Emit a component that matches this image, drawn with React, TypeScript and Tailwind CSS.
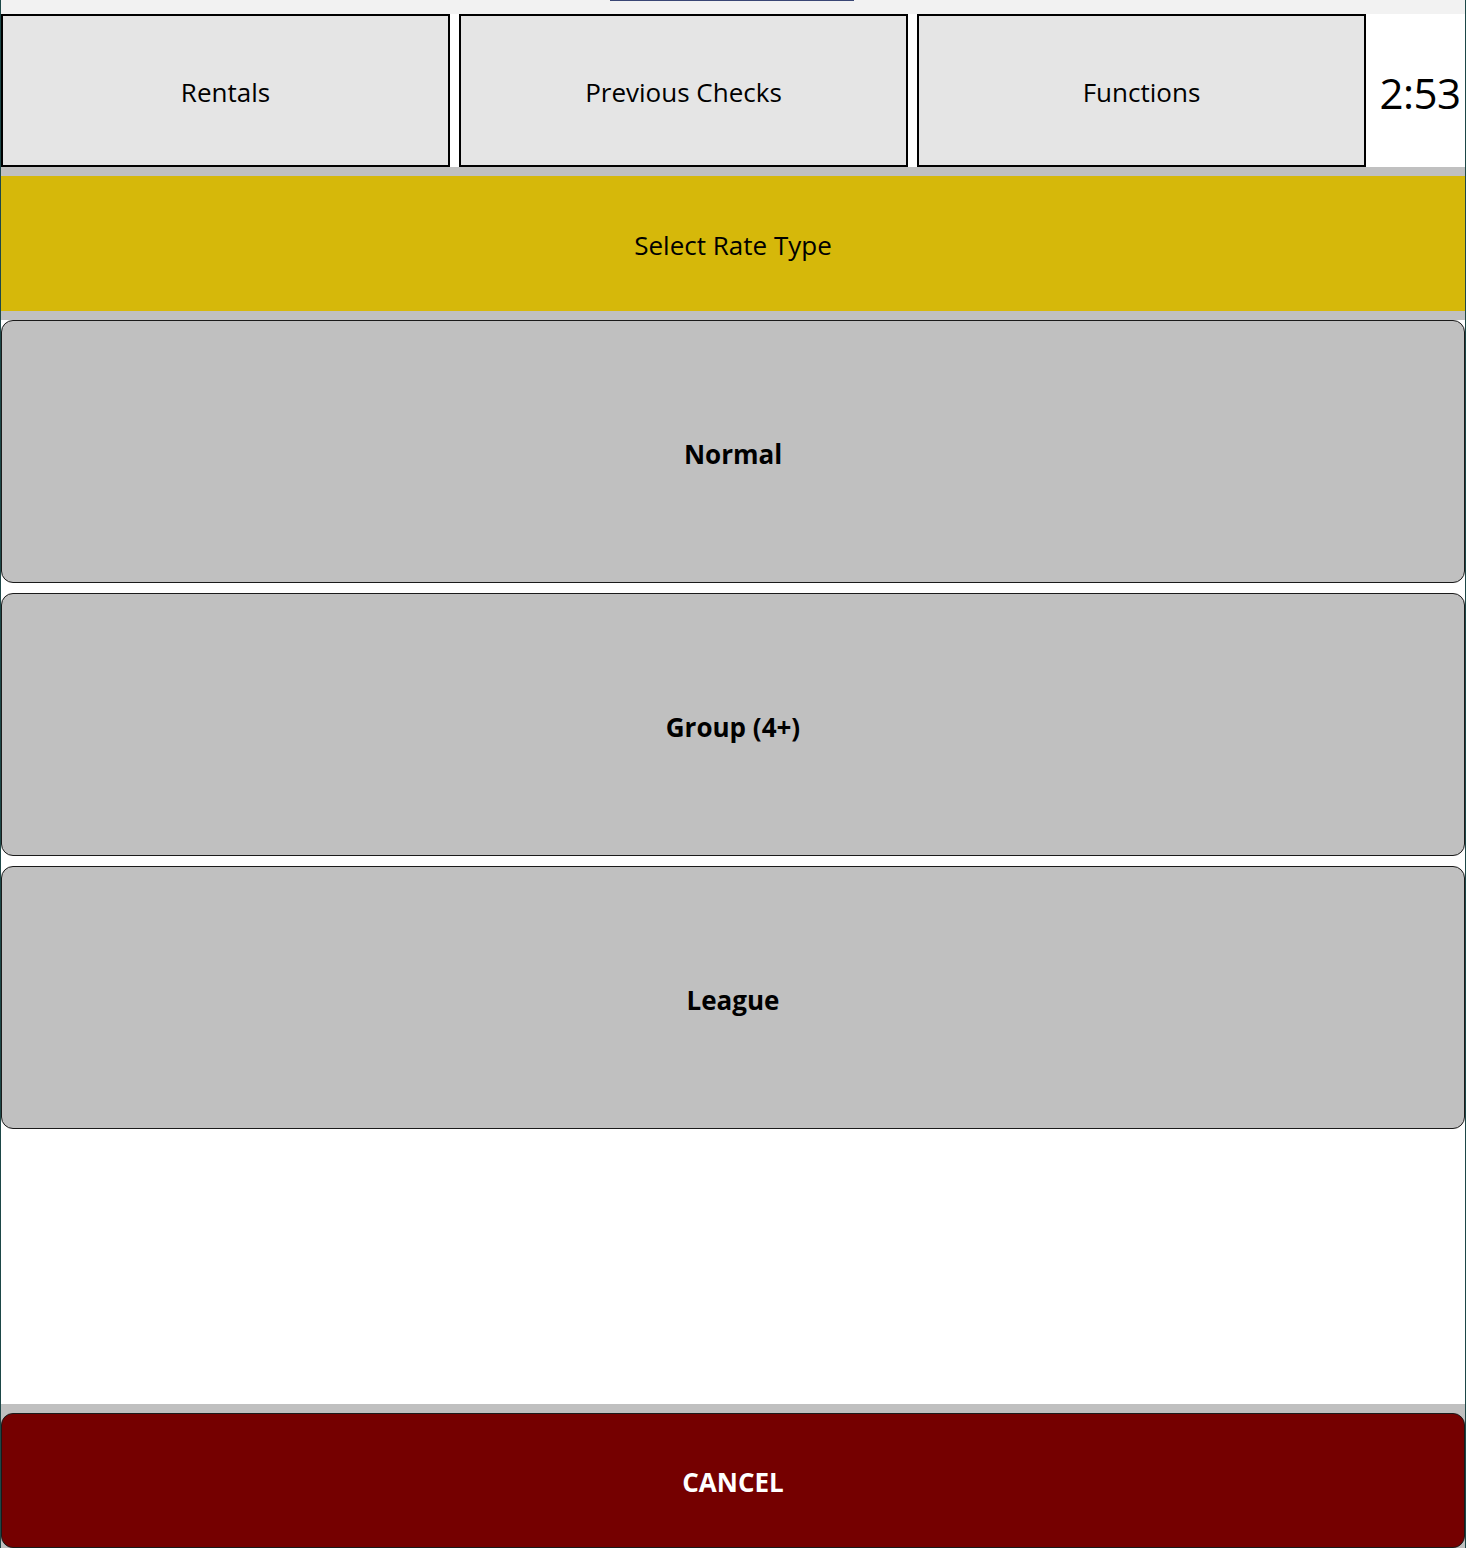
import React from 'react';

const font = { fontFamily: '"Segoe UI", "Open Sans", "Noto Sans", sans-serif' };

const topButtons = ['Rentals', 'Previous Checks', 'Functions'];
const rateTypes = ['Normal', 'Group (4+)', 'League'];

export default function App() {
  return (
    <div
      className="flex h-[1548px] w-full flex-col overflow-hidden border-x border-[#1d4848] bg-white text-black"
      style={font}
    >
      {/* title strip */}
      <div className="h-[14px] shrink-0 bg-[#f2f2f2]">
        <div className="ml-[609px] h-px w-[244px] bg-[#3a4775]" />
      </div>

      {/* nav row */}
      <div className="flex h-[153px] shrink-0 gap-[9px]">
        {topButtons.map((label) => (
          <button
            key={label}
            type="button"
            className="flex w-[449px] shrink-0 items-center justify-center border-2 border-black bg-[#e5e5e5] pt-[4px] text-[26px]"
          >
            {label}
          </button>
        ))}
        <div className="flex min-w-0 flex-1 items-center justify-center pt-[4px] text-[42px] leading-none tracking-[-0.5px]">
          2:53
        </div>
      </div>

      <div className="shrink-0 bg-[#c0c0c0] py-[9px]">
        <div className="flex h-[135px] items-center justify-center bg-[#d6b80a] pt-[4px] text-[26px]">
          Select Rate Type
        </div>
      </div>

      <div className="flex shrink-0 flex-col gap-[10px]">
        {rateTypes.map((label) => (
          <button
            key={label}
            type="button"
            className="flex h-[263px] items-center justify-center rounded-[12px] border border-[#1a1a1a] bg-[#c0c0c0] pt-[5px] text-[26px] font-bold"
          >
            {label}
          </button>
        ))}
      </div>

      <div className="flex-1" />

      <div className="shrink-0 bg-[#c0c0c0] pt-[9px]">
        <button
          type="button"
          className="flex h-[135px] w-full items-center justify-center rounded-[12px] border border-[#1a1a1a] bg-[#750000] pt-[4px] text-[26px] font-bold text-white"
        >
          CANCEL
        </button>
      </div>
    </div>
  );
}
